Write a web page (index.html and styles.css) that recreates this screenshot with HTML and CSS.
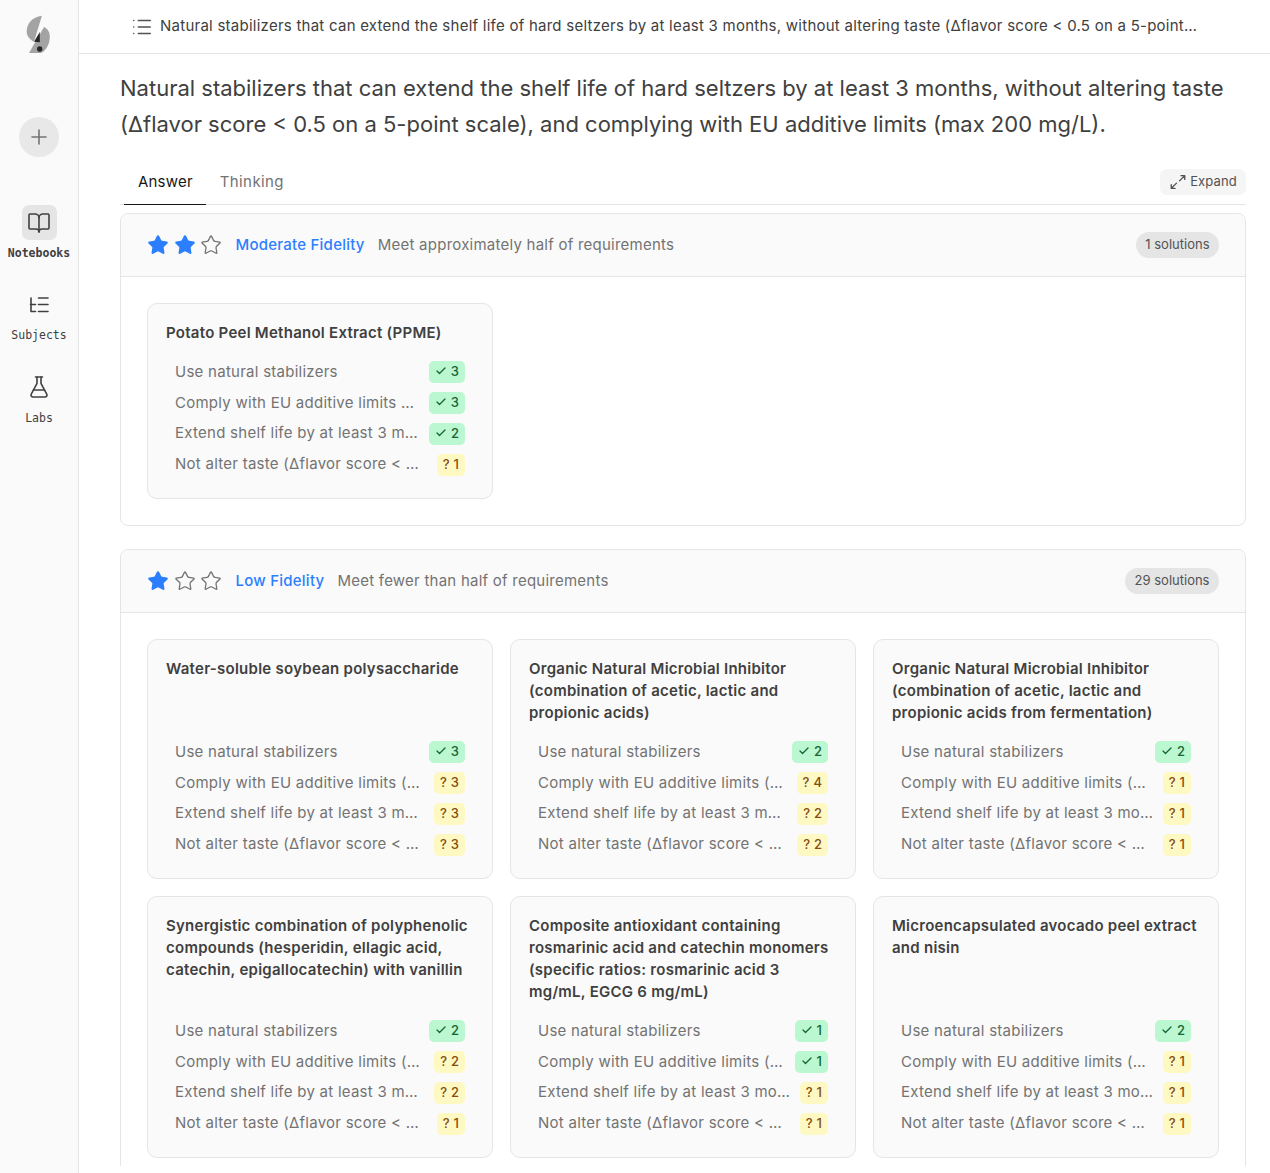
FILE: index.html
```html
<!DOCTYPE html>
<html lang="en">
<head>
<meta charset="utf-8">
<title>Natural stabilizers</title>
<link rel="stylesheet" href="styles.css">
</head>
<body>
<svg width="0" height="0" class="defs">
  <symbol id="star" viewBox="0 0 24 24"><path d="M11.525 2.295a.53.53 0 0 1 .95 0l2.31 4.679a2.123 2.123 0 0 0 1.595 1.16l5.166.756a.53.53 0 0 1 .294.904l-3.736 3.638a2.123 2.123 0 0 0-.611 1.878l.882 5.14a.53.53 0 0 1-.771.56l-4.618-2.428a2.122 2.122 0 0 0-1.973 0L6.396 21.01a.53.53 0 0 1-.77-.56l.881-5.139a2.122 2.122 0 0 0-.611-1.879L2.16 9.795a.53.53 0 0 1 .294-.906l5.165-.755a2.122 2.122 0 0 0 1.597-1.16z"/></symbol>
  <symbol id="check" viewBox="0 0 24 24"><path d="M20 6 9 17l-5-5"/></symbol>
</svg>
<div class="app">
  <aside class="sidebar">
    <svg class="logo" width="30" height="42" viewBox="27 14 26 42">
      <path class="logo-a" d="M42.9 15.8C33 17 27.7 24 27.7 31.5c0 4.5 3 8 7.3 10.3z"/>
      <path class="logo-b" d="M45 27c4 2 5.8 5.6 5.8 9.7 0 8-4.5 14.6-9 16.3H30z"/>
      <path class="logo-c" d="M40.8 32 35 41.8l5.8.5z"/>
      <circle class="logo-c" cx="40.7" cy="49" r="2.7"/>
    </svg>
    <button class="new-btn" type="button">
      <svg width="24" height="24" viewBox="0 0 24 24" class="ico"><path d="M5 12h14M12 5v14"/></svg>
    </button>
    <nav class="nav">
      <a class="nav-item active">
        <span class="nav-icon"><svg width="24" height="24" viewBox="0 0 24 24" class="ico"><path d="M12 7v14"/><path d="M3 18a1 1 0 0 1-1-1V4a1 1 0 0 1 1-1h5a4 4 0 0 1 4 4 4 4 0 0 1 4-4h5a1 1 0 0 1 1 1v13a1 1 0 0 1-1 1h-6a3 3 0 0 0-3 3 3 3 0 0 0-3-3z"/></svg></span>
        <span class="nav-label">Notebooks</span>
      </a>
      <a class="nav-item">
        <span class="nav-icon"><svg width="24" height="24" viewBox="0 0 24 24" class="ico"><path d="M4 5v13.5h4.5M3.5 11.5h5M11.5 5H21M11.5 11.5H21M11.5 18.5H21"/></svg></span>
        <span class="nav-label">Subjects</span>
      </a>
      <a class="nav-item">
        <span class="nav-icon"><svg width="24" height="24" viewBox="0 0 24 24" class="ico"><path d="M14 2v6a2 2 0 0 0 .245.96l5.51 10.08A2 2 0 0 1 18 22H6a2 2 0 0 1-1.755-2.96l5.51-10.08A2 2 0 0 0 10 8V2"/><path d="M6.453 15h11.094"/><path d="M8.5 2h7"/></svg></span>
        <span class="nav-label">Labs</span>
      </a>
    </nav>
  </aside>
  <div class="main">
    <header class="topbar">
      <svg width="22" height="22" viewBox="0 0 24 24" class="ico topbar-ico"><path d="M3 5h.01M3 12h.01M3 19h.01M8 5h13M8 12h13M8 19h13"/></svg>
      <div class="topbar-title">Natural stabilizers that can extend the shelf life of hard seltzers by at least 3 months, without altering taste (Δflavor score &lt; 0.5 on a 5-point scale), and complying with EU additive limits (max 200 mg/L).</div>
    </header>
    <div class="scroller">
      <h1 class="question">Natural stabilizers that can extend the shelf life of hard seltzers by at least 3 months, without altering taste (Δflavor score &lt; 0.5 on a 5-point scale), and complying with EU additive limits (max 200 mg/L).</h1>
      <div class="tabs">
        <div class="tab tab-active">Answer</div>
        <div class="tab">Thinking</div>
        <button class="expand" type="button">
          <svg width="18" height="18" viewBox="0 0 24 24" class="ico expand-ico"><path d="M16 3.5h5v5M21 3.5l-7 7M3 20.5l7-7M8 20.5H3v-5"/></svg>
          Expand
        </button>
      </div>

      <section class="group">
        <div class="group-head">
          <div class="stars">
            <svg class="star on"><use href="#star"/></svg>
            <svg class="star on"><use href="#star"/></svg>
            <svg class="star"><use href="#star"/></svg>
          </div>
          <span class="group-name">Moderate Fidelity</span>
          <span class="group-desc">Meet approximately half of requirements</span>
          <span class="pill">1 solutions</span>
        </div>
        <div class="grid">
          <article class="card">
            <h3 class="card-title">Potato Peel Methanol Extract (PPME)</h3>
            <ul class="reqs">
              <li class="req"><span class="req-text">Use natural stabilizers</span><span class="badge ok"><svg class="tick"><use href="#check"/></svg>3</span></li>
              <li class="req"><span class="req-text">Comply with EU additive limits (max 200 mg/L)</span><span class="badge ok"><svg class="tick"><use href="#check"/></svg>3</span></li>
              <li class="req"><span class="req-text">Extend shelf life by at least 3 months</span><span class="badge ok"><svg class="tick"><use href="#check"/></svg>2</span></li>
              <li class="req"><span class="req-text">Not alter taste (Δflavor score &lt; 0.5 on a 5-point scale)</span><span class="badge warn"><b>?</b>1</span></li>
            </ul>
          </article>
        </div>
      </section>

      <section class="group">
        <div class="group-head">
          <div class="stars">
            <svg class="star on"><use href="#star"/></svg>
            <svg class="star"><use href="#star"/></svg>
            <svg class="star"><use href="#star"/></svg>
          </div>
          <span class="group-name">Low Fidelity</span>
          <span class="group-desc">Meet fewer than half of requirements</span>
          <span class="pill">29 solutions</span>
        </div>
        <div class="grid">
          <article class="card">
            <h3 class="card-title">Water-soluble soybean polysaccharide</h3>
            <ul class="reqs">
              <li class="req"><span class="req-text">Use natural stabilizers</span><span class="badge ok"><svg class="tick"><use href="#check"/></svg>3</span></li>
              <li class="req"><span class="req-text">Comply with EU additive limits (max 200 mg/L)</span><span class="badge warn"><b>?</b>3</span></li>
              <li class="req"><span class="req-text">Extend shelf life by at least 3 months</span><span class="badge warn"><b>?</b>3</span></li>
              <li class="req"><span class="req-text">Not alter taste (Δflavor score &lt; 0.5 on a 5-point scale)</span><span class="badge warn"><b>?</b>3</span></li>
            </ul>
          </article>
          <article class="card">
            <h3 class="card-title">Organic Natural Microbial Inhibitor (combination of acetic, lactic and propionic acids)</h3>
            <ul class="reqs">
              <li class="req"><span class="req-text">Use natural stabilizers</span><span class="badge ok"><svg class="tick"><use href="#check"/></svg>2</span></li>
              <li class="req"><span class="req-text">Comply with EU additive limits (max 200 mg/L)</span><span class="badge warn"><b>?</b>4</span></li>
              <li class="req"><span class="req-text">Extend shelf life by at least 3 months</span><span class="badge warn"><b>?</b>2</span></li>
              <li class="req"><span class="req-text">Not alter taste (Δflavor score &lt; 0.5 on a 5-point scale)</span><span class="badge warn"><b>?</b>2</span></li>
            </ul>
          </article>
          <article class="card">
            <h3 class="card-title">Organic Natural Microbial Inhibitor (combination of acetic, lactic and propionic acids from fermentation)</h3>
            <ul class="reqs">
              <li class="req"><span class="req-text">Use natural stabilizers</span><span class="badge ok"><svg class="tick"><use href="#check"/></svg>2</span></li>
              <li class="req"><span class="req-text">Comply with EU additive limits (max 200 mg/L)</span><span class="badge warn"><b>?</b>1</span></li>
              <li class="req"><span class="req-text">Extend shelf life by at least 3 months</span><span class="badge warn"><b>?</b>1</span></li>
              <li class="req"><span class="req-text">Not alter taste (Δflavor score &lt; 0.5 on a 5-point scale)</span><span class="badge warn"><b>?</b>1</span></li>
            </ul>
          </article>
          <article class="card">
            <h3 class="card-title">Synergistic combination of polyphenolic compounds (hesperidin, ellagic acid, catechin, epigallocatechin) with vanillin</h3>
            <ul class="reqs">
              <li class="req"><span class="req-text">Use natural stabilizers</span><span class="badge ok"><svg class="tick"><use href="#check"/></svg>2</span></li>
              <li class="req"><span class="req-text">Comply with EU additive limits (max 200 mg/L)</span><span class="badge warn"><b>?</b>2</span></li>
              <li class="req"><span class="req-text">Extend shelf life by at least 3 months</span><span class="badge warn"><b>?</b>2</span></li>
              <li class="req"><span class="req-text">Not alter taste (Δflavor score &lt; 0.5 on a 5-point scale)</span><span class="badge warn"><b>?</b>1</span></li>
            </ul>
          </article>
          <article class="card">
            <h3 class="card-title">Composite antioxidant containing rosmarinic acid and catechin monomers (specific ratios: rosmarinic acid 3 mg/mL, EGCG 6 mg/mL)</h3>
            <ul class="reqs">
              <li class="req"><span class="req-text">Use natural stabilizers</span><span class="badge ok"><svg class="tick"><use href="#check"/></svg>1</span></li>
              <li class="req"><span class="req-text">Comply with EU additive limits (max 200 mg/L)</span><span class="badge ok"><svg class="tick"><use href="#check"/></svg>1</span></li>
              <li class="req"><span class="req-text">Extend shelf life by at least 3 months</span><span class="badge warn"><b>?</b>1</span></li>
              <li class="req"><span class="req-text">Not alter taste (Δflavor score &lt; 0.5 on a 5-point scale)</span><span class="badge warn"><b>?</b>1</span></li>
            </ul>
          </article>
          <article class="card">
            <h3 class="card-title">Microencapsulated avocado peel extract and nisin</h3>
            <ul class="reqs">
              <li class="req"><span class="req-text">Use natural stabilizers</span><span class="badge ok"><svg class="tick"><use href="#check"/></svg>2</span></li>
              <li class="req"><span class="req-text">Comply with EU additive limits (max 200 mg/L)</span><span class="badge warn"><b>?</b>1</span></li>
              <li class="req"><span class="req-text">Extend shelf life by at least 3 months</span><span class="badge warn"><b>?</b>1</span></li>
              <li class="req"><span class="req-text">Not alter taste (Δflavor score &lt; 0.5 on a 5-point scale)</span><span class="badge warn"><b>?</b>1</span></li>
            </ul>
          </article>
        </div>
      </section>
    </div>
  </div>
</div>
</body>
</html>
```

FILE: styles.css
```css
* { box-sizing: border-box; }
html, body { margin: 0; height: 100%; overflow: hidden; }
body { font-family: Inter, "Noto Sans", sans-serif; color: #404040; background: #fff; }
.defs { position: absolute; }
.app { display: flex; height: 100vh; }
.ico { fill: none; stroke: currentColor; stroke-width: 1.6; stroke-linecap: round; stroke-linejoin: round; display: block; }

.sidebar { width: 79px; flex: none; background: #fafafa; border-right: 1px solid #e5e5e5; display: flex; flex-direction: column; align-items: center; padding-top: 14px; }
.logo { display: block; }
.logo-a { fill: #a3a3a3; }
.logo-b { fill: #a3a3a3; }
.logo-c { fill: #262626; }
.new-btn { width: 40px; height: 40px; margin-top: 61px; border: 0; border-radius: 50%; background: #e8e8e8; color: #737373; display: flex; align-items: center; justify-content: center; padding: 0; }
.nav { margin-top: 48px; display: flex; flex-direction: column; align-items: center; gap: 27.4px; }
.nav-item { display: flex; flex-direction: column; align-items: center; color: #404040; }
.nav-icon { width: 35px; height: 35px; border-radius: 7px; display: flex; align-items: center; justify-content: center; }
.nav-item.active .nav-icon { background: #e5e5e5; }
.nav-label { font-family: "DejaVu Sans Mono", "Liberation Mono", monospace; font-size: 11.5px; line-height: 14px; margin-top: 6px; width: 70px; text-align: center; }
.nav-item.active .nav-label { font-weight: 700; }

.main { flex: 1; min-width: 0; display: flex; flex-direction: column; }
.topbar { height: 54px; flex: none; border-bottom: 1px solid #e5e5e5; display: flex; align-items: center; padding: 0 72px 0 52px; gap: 7px; }
.topbar-ico { color: #525252; flex: none; stroke-width: 1.7; }
.topbar-title { font-size: 15px; letter-spacing: 0.25px; line-height: 22px; margin-top: -2px; color: #404040; white-space: nowrap; overflow: hidden; text-overflow: ellipsis; min-width: 0; }
.scroller { height: 1112px; overflow: hidden; padding: 16px 24px 0 41px; }
.question { margin: 0; font-size: 22px; font-weight: 400; line-height: 36px; color: #404040; }
.tabs { margin-top: 16px; display: flex; align-items: flex-start; height: 47px; padding-left: 4px; border-bottom: 1px solid #e5e5e5; }
.tab { height: 47px; padding: 0 14px; line-height: 47px; font-size: 15px; letter-spacing: 0.4px; color: #737373; }
.tab-active { color: #171717; letter-spacing: 0.2px; padding-right: 13px; border-bottom: 1px solid #171717; }
.expand { margin: 11px 0 0 auto; height: 26px; width: 86px; border: 0; border-radius: 7px; background: #f5f5f5; color: #525252; font: 13px/24px Inter, sans-serif; letter-spacing: 0.12px; display: flex; align-items: center; justify-content: center; gap: 3px; padding: 0 0 2px; }
.expand-ico { stroke-width: 1.8; margin-top: 2px; }

.group { margin-top: 8px; border: 1px solid #e5e5e5; border-radius: 8px; }
.group + .group { margin-top: 23px; }
.group-head { height: 63px; background: #fafafa; border-bottom: 1px solid #e5e5e5; border-radius: 8px 8px 0 0; display: flex; align-items: center; padding: 0 26px; font-size: 15px; letter-spacing: 0.24px; line-height: 20px; }
.stars { display: flex; gap: 4.5px; margin-right: 13.5px; }
.star { width: 22px; height: 22px; fill: none; stroke: #737373; stroke-width: 1.4; stroke-linejoin: round; }
.star.on { fill: #2b7fff; stroke: #2b7fff; }
.group-name { color: #2b7fff; font-weight: 500; margin: 0 13px 0 0; }
.group-desc { color: #737373; }
.pill { margin-left: auto; height: 26px; line-height: 25px; padding: 0 9.5px; border-radius: 13px; background: #e5e5e5; color: #525252; font-size: 13px; letter-spacing: 0; }

.grid { display: grid; grid-template-columns: repeat(3, 346px); gap: 17px; padding: 26px; }
.card { background: #fafafa; border: 1px solid #e5e5e5; border-radius: 10px; padding: 18px 18px 22.2px; display: flex; flex-direction: column; }
.card-title { margin: 0 0 17.4px; font-size: 15px; letter-spacing: 0.26px; line-height: 22px; font-weight: 600; color: #404040; }
.reqs { list-style: none; margin: auto 9px 0; padding: 0; display: flex; flex-direction: column; gap: 8.8px; }
.req { display: flex; align-items: center; justify-content: space-between; gap: 9.4px; height: 22px; }
.req-text { flex: 1; min-width: 0; white-space: nowrap; overflow: hidden; text-overflow: ellipsis; font-size: 15px; letter-spacing: 0.26px; line-height: 20px; margin-top: -1px; color: #737373; }
.badge { flex: none; height: 22px; padding: 0 6px 2px; border-radius: 5px; display: flex; align-items: center; font-size: 13px; font-weight: 500; }
.badge b { font-weight: 500; margin-right: 4px; }
.ok { background: #bbf7d0; color: #166534; }
.warn { background: #fef9c3; color: #854d0e; }
.tick { width: 12px; height: 12px; fill: none; stroke: currentColor; stroke-width: 2.6; stroke-linecap: round; stroke-linejoin: round; margin-right: 4px; }
```
